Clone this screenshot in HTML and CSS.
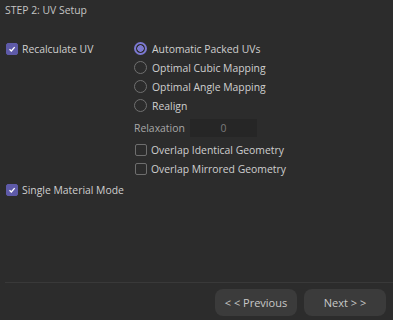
FILE: index.html
```html
<!DOCTYPE html>
<html lang="en">
<head>
  <meta charset="UTF-8">
  <title>UV Setup</title>
  <link rel="stylesheet" href="styles.css">
</head>
<body>
  <div class="panel">
    <div class="step-title">STEP 2: UV Setup</div>

    <div class="options">
      <div class="col-left">
        <label class="check-row">
          <span class="check on"><svg viewBox="0 0 12 12"><path d="M3 6.2 L5.2 8.3 L9.2 3.8" /></svg></span>
          Recalculate UV
        </label>
      </div>
      <div class="col-right">
        <label class="radio-row"><span class="radio on"></span>Automatic Packed UVs</label>
        <label class="radio-row"><span class="radio"></span>Optimal Cubic Mapping</label>
        <label class="radio-row"><span class="radio"></span>Optimal Angle Mapping</label>
        <label class="radio-row"><span class="radio"></span>Realign</label>
        <div class="field-row">
          <span class="field-label">Relaxation</span>
          <span class="field-input">0</span>
        </div>
        <label class="check-row small"><span class="check"></span>Overlap Identical Geometry</label>
        <label class="check-row small"><span class="check"></span>Overlap Mirrored Geometry</label>
      </div>
    </div>

    <label class="check-row single">
      <span class="check on"><svg viewBox="0 0 12 12"><path d="M3 6.2 L5.2 8.3 L9.2 3.8" /></svg></span>
      Single Material Mode
    </label>

    <div class="footer">
      <button class="btn">&lt; &lt; Previous</button>
      <button class="btn">Next &gt; &gt;</button>
    </div>
  </div>
</body>
</html>
```

FILE: styles.css
```css
html, body {
  margin: 0;
  padding: 0;
  background: #2c2c2c;
}

body {
  font-family: "Open Sans", "Noto Sans", sans-serif;
  font-size: 10.4px;
  color: #cfcfcf;
}

.panel {
  width: 393px;
  height: 320px;
  display: flex;
  flex-direction: column;
}

.step-title {
  padding: 3px 5px 0;
  height: 20px;
  color: #c4c4c4;
}

.options {
  display: flex;
  margin-top: 16px;
}

.col-left {
  width: 128px;
  padding-left: 6px;
}

.col-right {
  display: flex;
  flex-direction: column;
}

.check-row, .radio-row {
  display: flex;
  align-items: center;
  height: 19px;
  gap: 4px;
}

.check {
  width: 12px;
  height: 12px;
  box-sizing: border-box;
  border: 1px solid #6e6e6e;
  border-radius: 2px;
  display: flex;
  align-items: center;
  justify-content: center;
}

.check.on {
  background: #5e5aa8;
  border-color: #5e5aa8;
}

.check svg {
  width: 12px;
  height: 12px;
  fill: none;
  stroke: #ffffff;
  stroke-width: 1.6;
}

.radio-row {
  gap: 5px;
}

.radio {
  width: 13px;
  height: 13px;
  box-sizing: border-box;
  border: 1px solid #707070;
  border-radius: 50%;
}

.radio.on {
  border: 2px solid #7b78d0;
  background: radial-gradient(circle, #7b78d0 0 3px, #2c2c2c 3.5px);
}

.field-row {
  display: flex;
  align-items: center;
  height: 22px;
  margin: 2px 0 1px;
}

.field-label {
  width: 56px;
  color: #a8a8a8;
}

.field-input {
  width: 67px;
  height: 18px;
  line-height: 18px;
  background: #262626;
  color: #7c7c7c;
  text-align: center;
}

.check-row.small {
  padding-left: 1px;
}

.single {
  padding-left: 6px;
  margin-top: 2px;
}

.footer {
  margin-top: auto;
  margin-left: 5px;
  border-top: 1px solid #393939;
  padding: 6px 7px 4px 0;
  display: flex;
  justify-content: flex-end;
  gap: 7px;
}

.btn {
  width: 82px;
  height: 27px;
  border: none;
  border-radius: 8px;
  background: #3b3b3b;
  color: #c8c8c8;
  font-family: inherit;
  font-size: 11px;
  padding: 0;
}
```
